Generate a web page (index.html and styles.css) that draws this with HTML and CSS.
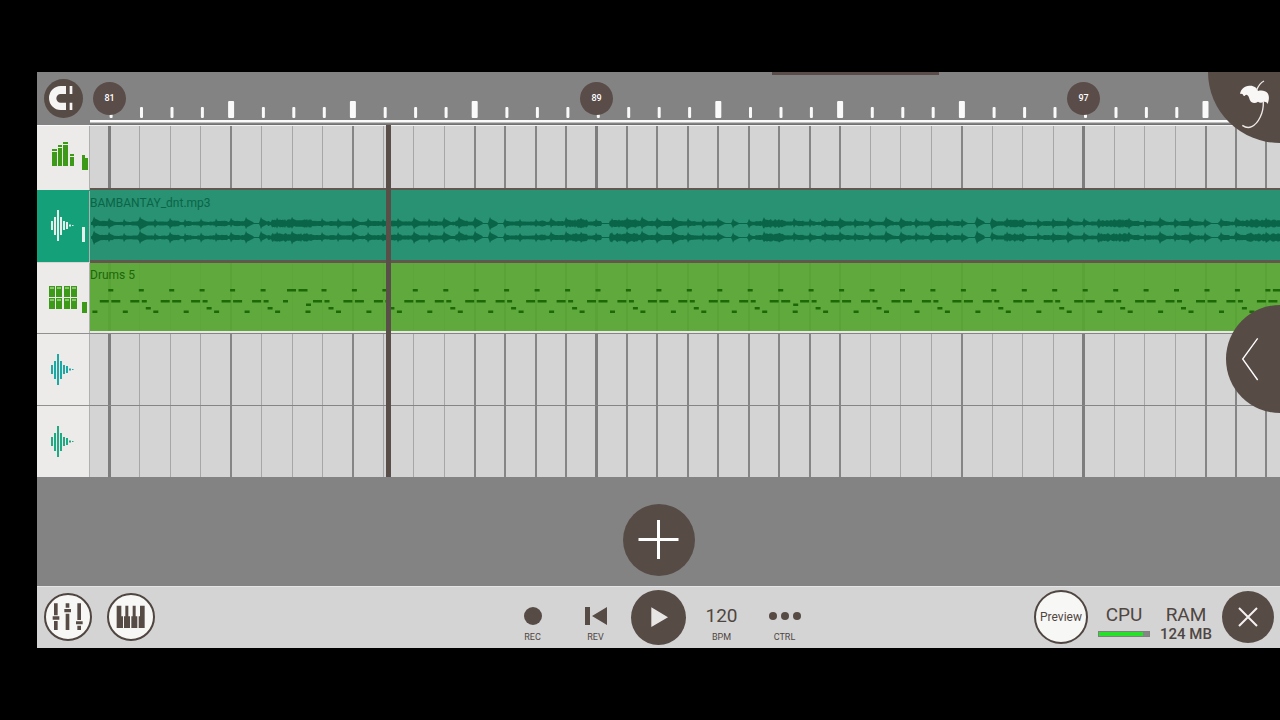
FILE: index.html
```html
<!DOCTYPE html>
<html lang="en">
<head>
    <meta charset="UTF-8">
    <title>Playlist</title>
    <link rel="stylesheet" href="styles.css">
</head>
<body>
    <svg class="defs" width="0" height="0">
        <symbol id="wave" viewBox="0 0 53 72">
            <path d="M14 32h2v9h-2zM17 28h2v18h-2zM20 21h2v31h-2zM23 28h2v18h-2zM26 32h2v9h-2zM29 33h2v7h-2zM32 35.5h2v2h-2zM35 36h1.5v1h-1.5z"/>
        </symbol>
    </svg>
    <main class="app">
        <header class="toolbar">
            <div class="corner">
                <button class="round magnet" aria-label="Snap">
                    <svg viewBox="42 39 117 117">
                        <path d="M108 60H92A35 36 0 0 0 92 132H108V110H92A13 13 0 0 1 92 84H108ZM119 60h8v24h-8zM119 110h8v22h-8z"/>
                    </svg>
                </button>
            </div>
            <div class="ruler">
                <svg id="ticks" class="fill"></svg>
                <span class="bar bar-81">81</span>
                <span class="bar bar-89">89</span>
                <span class="bar bar-97">97</span>
            </div>
            <div class="handle"></div>
            <button class="menu" aria-label="Menu">
                <svg viewBox="684 18 216 213">
                    <path d="M780 84C782 70 793 60 808 59C822 58 831 65 834 75C845 72 857 74 863 82C869 91 867 104 863 114C860 108 855 106 850 108C844 112 838 110 834 107C826 113 814 112 810 103C807 95 806 87 799 86C795 86 795 91 791 90C789 85 786 82 780 84Z"/>
                    <path class="line" d="M830 72Q838 52 852 45M850 108C851 140 836 172 815 182C803 188 794 183 787 178"/>
                </svg>
            </button>
        </header>

        <section class="playlist">
            <div class="heads">
                <button class="head head-first" aria-label="Mixer track">
                    <svg class="green" viewBox="0 0 53 65">
                        <path d="M15 24h5v2h-5zM15 27h5v14h-5zM21 20h4v2h-4zM21 23h4v18h-4zM26 17h5v2h-5zM26 20h5v21h-5zM33 29h4v2h-4zM33 32h4v9h-4zM45 30h3v3h3v12h-6z"/>
                    </svg>
                </button>
                <button class="head head-on" aria-label="BAMBANTAY_dnt.mp3 track">
                    <svg viewBox="0 1 53 72">
                        <use href="#wave" width="53" height="72"/>
                        <path d="M45 38h3v15h-3z"/>
                    </svg>
                </button>
                <button class="head head-drums" aria-label="Drums 5 track">
                    <svg class="green" viewBox="0 1 53 71">
                        <path d="M12 25h6v11h-6zM19 25h6v11h-6zM27 25h6v11h-6zM34 25h6v11h-6zM12 37h6v11h-6zM19 37h6v11h-6zM27 37h6v11h-6zM34 37h6v11h-6zM45 41h5v11h-5z"/>
                        <path class="led" d="M13 27h4M20 27h4M28 27h4M35 27h4M13 39h4M20 39h4M28 39h4M35 39h4"/>
                    </svg>
                </button>
                <button class="head head-cyan" aria-label="Audio track 1">
                    <svg viewBox="0 0 53 72"><use href="#wave" width="53" height="72"/></svg>
                </button>
                <button class="head head-teal" aria-label="Audio track 2">
                    <svg viewBox="0 0 53 72"><use href="#wave" width="53" height="72"/></svg>
                </button>
            </div>
            <div class="lanes">
                <svg id="grid" class="fill"></svg>
                <div class="lane lane-first"></div>
                <div class="clip clip-audio">
                    <svg id="audio" class="fill"></svg>
                    <span class="clip-name">BAMBANTAY_dnt.mp3</span>
                </div>
                <div class="lane lane-drums">
                    <div class="clip clip-drums">
                        <svg id="notes" class="fill"></svg>
                        <span class="clip-name">Drums 5</span>
                    </div>
                </div>
                <div class="lane"></div>
                <div class="lane"></div>
                <div class="playhead"></div>
            </div>
            <button class="drawer" aria-label="Open side panel">
                <svg viewBox="798 360 162 324"><path d="M893 460L848 522L893 585"/></svg>
            </button>
        </section>

        <section class="add-area">
            <button class="round add" aria-label="Add track">
                <svg viewBox="0 0 72 72"><path d="M15.5 35.5H55.5M35.5 16V55"/></svg>
            </button>
        </section>

        <footer class="controls">
            <div class="left">
                <button class="round light" aria-label="Mixer">
                    <svg viewBox="42 53 144 144">
                        <path d="M72 84h11v36h-11zM68 123h20v10h-20zM72 137h11v27h-11zM107 84h11v13h-11zM103 101h20v10h-20zM107 115h11v49h-11zM142 84h11v50h-11zM138 138h20v9h-20zM142 151h11v13h-11z"/>
                    </svg>
                </button>
                <button class="round light" aria-label="Keyboard">
                    <svg viewBox="229 53 144 144">
                        <path d="M258 91h14v32h5v35h-19zM284 91h9v32h5v35h-18v-35h4zM306 91h9v32h5v35h-18v-35h4zM328 91h14v67h-18v-35h4z"/>
                    </svg>
                </button>
            </div>
            <div class="transport">
                <button class="ctl">
                    <span class="glyph"><svg width="18" height="18"><circle cx="9" cy="9" r="9"/></svg></span>
                    <span class="label">REC</span>
                </button>
                <button class="ctl">
                    <span class="glyph"><svg width="22" height="18"><path d="M0 0h5v18h-5zM22 0v18L7 9z"/></svg></span>
                    <span class="label">REV</span>
                </button>
                <button class="round play" aria-label="Play">
                    <svg viewBox="392 283 165 165"><path d="M453 335L503 365L453 394Z"/></svg>
                </button>
                <button class="ctl">
                    <span class="glyph big">120</span>
                    <span class="label">BPM</span>
                </button>
                <button class="ctl">
                    <span class="glyph"><svg width="32" height="8"><circle cx="4" cy="4" r="4"/><circle cx="16" cy="4" r="4"/><circle cx="28" cy="4" r="4"/></svg></span>
                    <span class="label">CTRL</span>
                </button>
            </div>
            <div class="right">
                <button class="round light preview">Preview</button>
                <div class="stat">
                    <span class="big">CPU</span>
                    <div class="meter"><div class="meter-fill" style="width:88%"></div></div>
                </div>
                <div class="stat">
                    <span class="big">RAM</span>
                    <span class="ram">124 MB</span>
                </div>
                <button class="round close" aria-label="Close">
                    <svg viewBox="0 0 52 52"><path d="M17 17L35 35M35 17L17 35"/></svg>
                </button>
            </div>
        </footer>
    </main>
    <script src="playlist.js"></script>
</body>
</html>
```

FILE: styles.css
```css
*{
    box-sizing: border-box;
    margin: 0;
    padding: 0;
}
body{
    display: flex;
    min-height: 100vh;
    padding: 72px 0 72px 37px;
    background: #000;
    color: #4f4642;
    font-family: Roboto, "Liberation Sans", sans-serif;
    overflow-x: hidden;
}
button{
    border: none;
    background: none;
    color: inherit;
    font: inherit;
    cursor: pointer;
}
svg{
    display: block;
}
.defs{
    position: absolute;
}
.fill{
    position: absolute;
    top: 0;
    left: 0;
    width: 100%;
    height: 100%;
}
.app{
    flex: 1;
    min-width: 0;
    display: flex;
    flex-direction: column;
    background: #838383;
}
.round{
    flex: none;
    border-radius: 50%;
    background: #574b46;
}

/* top ruler */
.toolbar{
    position: relative;
    display: flex;
    height: 53px;
}
.corner{
    width: 53px;
    padding: 7px;
}
.magnet{
    width: 39px;
    height: 39px;
    fill: #f6f5f4;
}
.ruler{
    position: relative;
    flex: 1;
    border-bottom: 1px solid #707070;
    overflow: hidden;
}
#ticks{
    fill: #fafafa;
}
.bar{
    position: absolute;
    top: 10px;
    width: 33px;
    height: 33px;
    border-radius: 50%;
    background: #5a4c48;
    color: #fff;
    font-size: 9px;
    font-weight: 500;
    line-height: 33px;
    text-align: center;
}
.bar-81{
    left: 3px;
}
.bar-89{
    left: 490px;
}
.bar-97{
    left: 977px;
}
.handle{
    position: absolute;
    top: 0;
    left: 735px;
    width: 167px;
    height: 3px;
    background: #5a4c48;
}
.menu{
    position: absolute;
    top: 0;
    right: 0;
    z-index: 2;
    width: 72px;
    height: 71px;
    border-bottom-left-radius: 100%;
    background: #574b46;
    fill: #f8f7f5;
}
.menu .line{
    fill: none;
    stroke: #eeeae7;
    stroke-width: 4;
}

/* tracks */
.playlist{
    position: relative;
    display: grid;
    grid-template-columns: 53px 1fr;
}
.head{
    display: block;
    width: 53px;
    height: 72px;
    border-top: 1px solid #909090;
    background: #ecebe9;
    box-shadow: inset -1px 0 #b0b0b0;
}
.head svg{
    width: 53px;
    margin-top: -1px;
}
.head-first{
    height: 65px;
    border-top-color: #fafafa;
}
.head-on{
    border-top-color: #14a078;
    background: #14a078;
    fill: #e4eeea;
}
.head-drums{
    height: 71px;
    border-top-color: #d8d6d3;
}
.green{
    fill: #3d9a18;
}
.led{
    stroke: #dcebd2;
    stroke-width: 1;
}
.head-cyan{
    fill: #1ea8a4;
}
.head-teal{
    fill: #20aa84;
}
.lanes{
    position: relative;
    min-width: 0;
    background: #d4d4d4;
    overflow: hidden;
}
.lane{
    position: relative;
    height: 72px;
    border-top: 1px solid #858585;
}
.lane-first{
    height: 63px;
    border-top-color: #f2f2f2;
}
.lane-drums{
    height: 70px;
    border: none;
    border-bottom: 2px solid #e6e6e4;
}
.clip{
    position: relative;
    overflow: hidden;
}
.clip-name{
    position: relative;
    display: block;
    padding-top: 5px;
    font-size: 12px;
    line-height: 16px;
}
.clip-audio{
    height: 75px;
    border-top: 2px solid #62574f;
    border-bottom: 3px solid #62574f;
    background: #289272;
    color: #0a6548;
    fill: #0a6548;
}
.clip-drums{
    height: 68px;
    background: rgba(87,166,50,0.93);
    color: #1c670a;
    fill: #1d6908;
}
.clip-drums .clip-name{
    padding-top: 4px;
}
.playhead{
    position: absolute;
    top: 0;
    bottom: 0;
    left: 296px;
    width: 5px;
    background: #5a4e48;
}
.drawer{
    position: absolute;
    top: 180px;
    right: 0;
    width: 54px;
    height: 108px;
    border-radius: 54px 0 0 54px;
    background: #574b46;
    fill: none;
    stroke: #fff;
    stroke-width: 4;
}

/* add button */
.add-area{
    flex: 1;
    padding: 27px 0 10px;
}
.add{
    display: block;
    width: 72px;
    height: 72px;
    margin: 0 auto;
    fill: none;
    stroke: #fff;
    stroke-width: 3;
}

/* bottom bar */
.controls{
    display: grid;
    grid-template-columns: 1fr auto 1fr;
    align-items: center;
    height: 62px;
    padding-bottom: 1px;
    border-top: 1px solid #e4e4e4;
    background: #d4d4d4;
    fill: #574b46;
}
.left{
    display: flex;
    gap: 15px;
    padding-left: 7px;
}
.light{
    width: 48px;
    height: 48px;
    border: 2px solid #4f4541;
    background: #f7f7f5;
}
.light svg{
    width: 48px;
    margin: -2px;
}
.transport{
    display: grid;
    grid-template-columns: repeat(5, 63px);
    justify-items: center;
    align-items: center;
}
.glyph{
    display: flex;
    align-items: center;
    justify-content: center;
    height: 24px;
}
.big{
    font-size: 19px;
    line-height: 22px;
}
.label{
    display: block;
    font-size: 9px;
    line-height: 12px;
}
.ctl{
    padding-top: 12px;
}
.ctl .label{
    margin-top: 3px;
}
.play{
    width: 55px;
    height: 55px;
    fill: #e8e6e4;
}
.right{
    display: flex;
    justify-content: flex-end;
    align-items: center;
    gap: 10px;
    padding-right: 6px;
}
.preview{
    width: 54px;
    height: 54px;
    font-size: 12px;
}
.stat{
    display: flex;
    flex-direction: column;
    align-items: center;
    width: 52px;
    height: 50px;
    padding-top: 12px;
    white-space: nowrap;
}
.meter{
    width: 52px;
    height: 6px;
    margin-top: 5px;
    border: 1px solid #808080;
    background: #858585;
}
.meter-fill{
    height: 4px;
    background: #27e02a;
}
.ram{
    font-size: 15px;
    font-weight: 500;
    line-height: 16px;
}
.close{
    width: 52px;
    height: 52px;
    fill: none;
    stroke: #f4f2f0;
    stroke-width: 2;
}
```

FILE: playlist.js
```js
var BEAT = 30.45;
var START = 19.3;
var COUNT = 120;

function beatX(k) {
    return START + k * BEAT;
}
function rect(x, y, w, h, extra) {
    return '<rect x="' + x.toFixed(1) + '" y="' + y + '" width="' + w + '" height="' + h + '" ' + (extra || '') + '/>';
}

//ruler ticks
function drawTicks() {
    var out = rect(0, 48, '100%', 2.5);
    for (var k = 0; k < COUNT; k++) {
        if (k % 4 == 0 && k % 16 != 0) {
            out += rect(beatX(k) - 3, 29, 6, 17, 'rx="1"');
        } else {
            out += rect(beatX(k) + 0.3, 35, 3, 11, 'rx="1"');
        }
    }
    document.getElementById('ticks').innerHTML = out;
}

//vertical grid lines
function drawGrid() {
    var out = '';
    for (var k = 0; k < COUNT; k++) {
        var w = 1, color = '#a6a6a6';
        if (k % 16 == 0) {
            w = 3;
            color = '#7d7d7d';
        } else if (k % 4 == 0 || k % 24 >= 12) {
            w = 2;
            color = '#858585';
        }
        out += rect(Math.round(beatX(k) - w / 2), 0, w, '100%', 'fill="' + color + '"');
    }
    document.getElementById('grid').innerHTML = out;
}

//drum notes
function drawNotes() {
    var out = '';
    function note(k, offset, y, w) {
        out += rect(beatX(k) + offset, y, w, 2.5);
    }
    for (var k = -1; k < COUNT; k++) {
        var odd = k % 2 != 0;
        var fill = k % 32 == 6;
        note(k, k == 6 ? -5 : -1, 26, k == 6 ? 9 : 5);
        if (fill) {
            note(k, 6.5, 26, 9);
        }
        if (k == 6) {
            note(k, -9, 37, 5);
        } else {
            note(k, -9.5, 37, 9);
            note(k, 2, 37, odd ? 5 : 9);
        }
        if (odd) {
            note(k, 6, 44, 5);
        }
        if (k % 16 == 6) {
            note(k, 14, 40.5, 5);
        }
        note(k, 13.5, 47.5, 5);
    }
    document.getElementById('notes').innerHTML = out;
}

//stereo waveform, loud and quiet parts are [from, to]
var loud = [[182, 222], [477, 497], [520, 548], [673, 693], [915, 933], [1008, 1038], [1157, 1190]];
var quiet = [[160, 177], [387, 415], [512, 519], [630, 658], [875, 905], [1115, 1128]];

function inside(list, x) {
    for (var i = 0; i < list.length; i++) {
        if (x >= list[i][0] && x <= list[i][1]) {
            return true;
        }
    }
    return false;
}
function noise(n) {
    return Math.abs(Math.sin(n) * 437.31) % 1;
}
function drawAudio() {
    var out = '';
    var step = BEAT / 2;
    [33.5, 47.5].forEach(function (center, ch) {
        var top = [], bottom = [];
        for (var x = 1; x < 3000; x++) {
            //nearest hit and how far we are from it
            var n = Math.round((x - 4) / step);
            var d = Math.round((x - 4) - n * step);
            var base = 1.3 + noise(Math.floor(x / 6) * 1.7) * 1.2 + noise(x * 12.9 + ch) * 0.5;
            if (inside(quiet, x)) {
                base = 0.6;
            } else if (inside(loud, x)) {
                base = 2.6 + noise(x * 3.1 + ch) * 1.8;
            }
            var peak = 4.5 + noise(n * 7.3 + 1) * 2.5;
            var fall = d < 0 ? 3 * -d : d * 0.5 + (d > 0 ? 1.5 : 0);
            var up = Math.max(base, peak - fall);
            var down = Math.max(base, peak * (0.7 + noise(n * 3.7 + ch) * 0.4) - fall);
            top.push(x + ',' + (center - up).toFixed(1));
            bottom.unshift(x + ',' + (center + down).toFixed(1));
        }
        out += '<polygon points="' + top.concat(bottom).join(' ') + '"/>';
    });
    document.getElementById('audio').innerHTML = out;
}

drawTicks();
drawGrid();
drawNotes();
drawAudio();
```
